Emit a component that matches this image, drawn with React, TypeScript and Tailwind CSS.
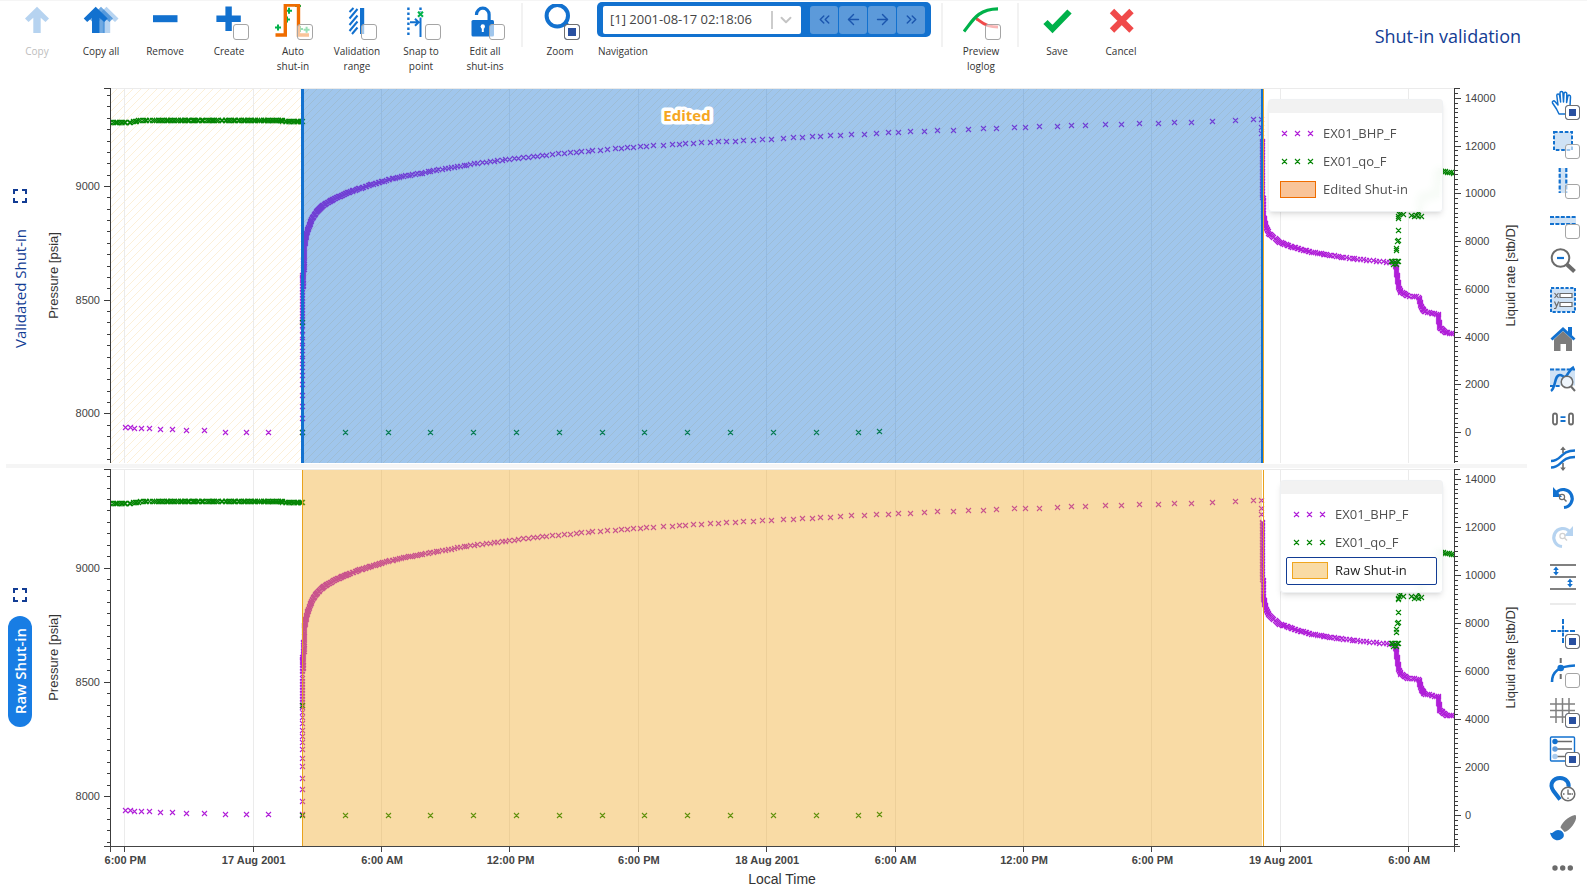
import { useLayoutEffect, useRef, useState } from 'react';
import type { ReactNode } from 'react';
import clsx from 'clsx';
import { ArrowLeft, ArrowRight, ChevronDown, ChevronsLeft, ChevronsRight } from 'lucide-react';

const BLUE = '#1271cf';
const GREY = '#6b6b6b';
const BHP_COLOR = '#b01fd8';
const RATE_COLOR = '#058505';

/* ---------- data: hours since 16 Aug 18:00 ---------- */

type Point = [number, number];

const T_MIN = -0.67;
const T_MAX = 62.14;
const SHUT_START = 8.31;
const SHUT_END = 53.18;
const PRESSURE: Point = [7782, 9431];
const RATE: Point = [-1295, 14418];

function noise(i: number) {
  const v = Math.sin(i * 12.9898) * 43758.5453;
  return v - Math.floor(v) - 0.5;
}

// Puts `n` evenly spaced marks between each anchor and the next one
function along(anchors: [number, number, number][]): Point[] {
  const out: Point[] = [];
  for (let i = 0; i < anchors.length - 1; i++) {
    const [x0, y0, n] = anchors[i];
    const [x1, y1] = anchors[i + 1];
    for (let k = 0; k < n; k++) {
      out.push([x0 + ((x1 - x0) * k) / n, y0 + ((y1 - y0) * k) / n]);
    }
  }
  const last = anchors[anchors.length - 1];
  out.push([last[0], last[1]]);
  return out;
}

// Build-up pressure against time since shut-in, interpolated in log time
const BUILDUP: Point[] = [
  [0.07, 8560], [0.12, 8742], [0.2, 8785], [0.35, 8829], [0.51, 8865], [0.89, 8909],
  [1.29, 8934], [2.06, 8969], [2.85, 8996], [3.69, 9020], [4.58, 9042], [5.51, 9057],
  [9.72, 9120], [15.7, 9174], [21.7, 9207], [27.7, 9237], [33.7, 9260], [39.7, 9278], [44.6, 9292],
];

function buildUp(): Point[] {
  const out: Point[] = [];
  let i = 0;
  for (let dt = 0.07; dt < 44.3; dt *= 1.021 + 0.01 * noise(i), i++) {
    const hi = Math.max(1, BUILDUP.findIndex(([x]) => x > dt));
    const [x0, y0] = BUILDUP[hi - 1];
    const [x1, y1] = BUILDUP[hi];
    const f = Math.log(dt / x0) / Math.log(x1 / x0);
    out.push([SHUT_START + dt, y0 + (y1 - y0) * f]);
  }
  return out;
}

const bhp: Point[] = [
  [0.04, 7939], [0.29, 7939], [0.46, 7934], [0.82, 7934], [1.18, 7934], [1.69, 7930],
  [2.27, 7930], [2.92, 7925], [3.75, 7925], [4.73, 7920], [5.71, 7920], [6.74, 7920],
  ...[7920, 7978, 8032, 8080, 8130, 8168, 8205, 8235, 8263, 8291, 8320, 8345, 8368, 8388].map(
    (p): Point => [8.32, p],
  ),
  ...along([[8.32, 8400, 14], [8.32, 8585, 10], [8.38, 8640, 14], [8.42, 8742, 0]]),
  ...buildUp(),
  [52.77, 9294],
  [53.13, 9294], [53.13, 9260], [53.13, 9232],
  ...along([
    [53.19, 9200, 50], [53.22, 8882, 18], [53.34, 8823, 7], [53.5, 8791, 9], [54, 8755, 10],
    [54.6, 8734, 11], [55.4, 8713, 9], [56.2, 8699, 8], [57.1, 8687, 8], [58.2, 8675, 5],
    [59, 8668, 3], [59.4, 8664, 24], [59.55, 8560, 6], [59.66, 8536, 6], [59.97, 8519, 5],
    [60.5, 8513, 12], [60.6, 8472, 8], [60.75, 8450, 8], [61.4, 8436, 16], [61.47, 8379, 8],
    [61.77, 8357, 4], [62.1, 8353, 0],
  ]),
];

const rate: Point[] = [
  ...along([
    [-0.6, 12984, 12], [0.1, 12984, 8], [0.65, 13060, 6], [1.3, 13085, 96], [7.35, 13085, 3],
    [7.5, 13040, 18], [8.28, 13040, 0],
  ]).map(([t, q], i): Point => [t + 0.1 * noise(i), q]),
  [8.32, 4597],
  [8.32, 0],
  ...Array.from({ length: 13 }, (_, i): Point => [10.33 + 2 * i, 0]),
  [35.27, 30],
  ...along([[59.2, 7150, 5], [59.55, 7180, 0]]),
  [59.3, 7060], [59.45, 7060], [59.46, 7640], [59.46, 7730], [59.5, 8010], [59.56, 8060], [59.53, 8470],
  [59.53, 8980], [59.55, 9060], [59.6, 9130], [59.62, 9190], [59.8, 9130], [60.15, 9110], [60.3, 9060],
  [60.4, 9090], [60.5, 9050], [60.6, 9070], [60.5, 9250],
  ...along([[60.55, 9400, 6], [60.6, 9900, 16], [61.3, 9960, 12], [61.4, 10980, 8], [62.1, 10870, 0]]),
];

/* ---------- chart ---------- */

function useSize() {
  const ref = useRef<HTMLDivElement>(null);
  const [size, setSize] = useState({ width: 1487, height: 378 });
  useLayoutEffect(() => {
    const el = ref.current;
    if (!el) return;
    const measure = () => setSize({ width: el.clientWidth, height: el.clientHeight });
    measure();
    const observer = new ResizeObserver(measure);
    observer.observe(el);
    return () => observer.disconnect();
  }, []);
  return { ref, ...size };
}

const LEFT = 70;
const RIGHT = 73;
const GRID_HOURS = [0, 6, 12, 18, 24, 30, 36, 42, 48, 54, 60];
const GRID_LABELS = [
  '6:00 PM', '17 Aug 2001', '6:00 AM', '12:00 PM', '6:00 PM', '18 Aug 2001',
  '6:00 AM', '12:00 PM', '6:00 PM', '19 Aug 2001', '6:00 AM',
];

function timeScale(width: number) {
  return (t: number) => LEFT + ((t - T_MIN) / (T_MAX - T_MIN)) * (width - LEFT - RIGHT);
}

function marks(points: Point[], x: (v: number) => number, y: (v: number) => number) {
  return points
    .map(([a, b]) => `M${Math.floor(x(a)) - 2} ${Math.round(y(b)) - 2}l5 5m0-5l-5 5`)
    .join('');
}

function range(from: number, to: number, step: number) {
  const out: number[] = [];
  for (let v = Math.ceil(from / step) * step; v <= to; v += step) out.push(v);
  return out;
}

interface ChartProps {
  variant: 'edited' | 'raw';
  top: number;
  children: ReactNode;
}

function Chart({ variant, top, children }: ChartProps) {
  const { ref, width, height } = useSize();
  const edited = variant === 'edited';
  const bottom = height;
  const x = timeScale(width);
  const y = (v: number, [lo, hi]: Point) => bottom - ((v - lo) / (hi - lo)) * (bottom - top);
  const yp = (v: number) => y(v, PRESSURE);
  const yq = (v: number) => y(v, RATE);
  const right = width - RIGHT;
  const x0 = Math.round(x(SHUT_START));
  const x1 = Math.round(x(SHUT_END));
  const mid = (top + bottom) / 2;

  return (
    <div ref={ref} className="relative min-w-0 flex-1 overflow-hidden">
      <svg
        width={width}
        height={height}
        className="absolute inset-0 font-['Liberation_Sans',sans-serif]"
        role="img"
        aria-label={edited ? 'Validated shut-in chart' : 'Raw shut-in chart'}
      >
        <defs>
          <pattern id={`hatch-${variant}`} width="8" height="8" patternUnits="userSpaceOnUse">
            <path d="M-1 9 9-1M-1 1 1-1M7 9 9 7" stroke="#fbe9c8" strokeWidth="0.7" />
          </pattern>
          <clipPath id={`plot-${variant}`}>
            <rect x={LEFT} y={top} width={right - LEFT} height={bottom - top} />
          </clipPath>
        </defs>

        {edited && (
          <rect x={LEFT} y={top} width={x1 - LEFT} height={bottom - top} fill="url(#hatch-edited)" />
        )}
        <path d={`M${LEFT} ${top + 0.5}H${right}`} stroke="#ebebeb" />
        {GRID_HOURS.map((t) => (
          <path key={t} d={`M${Math.round(x(t)) + 0.5} ${top}V${bottom}`} stroke="#ebebeb" />
        ))}

        <g clipPath={`url(#plot-${variant})`} fill="none" strokeWidth="1.1">
          <path d={marks(bhp, x, yp)} stroke={BHP_COLOR} />
          <path d={marks(rate, x, yq)} stroke={RATE_COLOR} />
        </g>

        <rect
          x={x0}
          y={top + 1}
          width={x1 - x0}
          height={bottom - top - 1}
          fill={edited ? BLUE : '#f0a61e'}
          fillOpacity="0.4"
        />
        {edited ? (
          <>
            <path d={`M${x0 + 0.5} ${top + 1}V${bottom}`} stroke={BLUE} strokeWidth="3" />
            <path d={`M${x1} ${top + 1}V${bottom}`} stroke={BLUE} strokeWidth="2" />
            <path d={`M${x1 + 1.5} ${top + 1}V${bottom}`} stroke="#efa820" />
            <text
              x={(LEFT + x1) / 2 + 1}
              y={top + 33}
              textAnchor="middle"
              className="font-['Open_Sans',sans-serif] text-[15px] font-bold"
              fill="#f5a623"
              stroke="white"
              strokeWidth="7"
              strokeLinejoin="round"
              paintOrder="stroke"
            >
              Edited
            </text>
          </>
        ) : (
          <path d={`M${x0 + 0.5} ${top + 1}V${bottom}M${x1 + 1.5} ${top + 1}V${bottom}`} stroke="#e9a21c" />
        )}

        <g stroke="#3c3c3c" fill="none">
          <path d={`M${LEFT + 0.5} ${top}V${bottom}M${LEFT - 6} ${top + 0.5}h6`} />
          <path d={`M${right + 0.5} ${top}V${bottom}M${right} ${top + 0.5}h6`} />
          {range(PRESSURE[0], PRESSURE[1], 50).map((v) => (
            <path key={v} d={`M${LEFT} ${Math.round(yp(v)) + 0.5}h${v % 500 ? -3 : -6}`} />
          ))}
          {range(RATE[0], RATE[1], 200).map((v) => (
            <path key={v} d={`M${right} ${Math.round(yq(v)) + 0.5}h${v % 2000 ? 4 : 7}`} />
          ))}
        </g>
        <g fill="#444" className="text-[11px]">
          {range(PRESSURE[0], PRESSURE[1], 500).map((v) => (
            <text key={v} x={LEFT - 10} y={Math.round(yp(v)) + 4} textAnchor="end">
              {v}
            </text>
          ))}
          {range(0, RATE[1], 2000).map((v) => (
            <text key={v} x={right + 11} y={Math.round(yq(v)) + 4}>
              {v}
            </text>
          ))}
        </g>
        <g fill="#333" className="text-[13px]" textAnchor="middle">
          <text transform={`translate(18 ${mid}) rotate(-90)`}>Pressure [psia]</text>
          <text transform={`translate(${width - 12} ${mid}) rotate(-90)`}>Liquid rate [stb/D]</text>
        </g>
      </svg>
      {children}
    </div>
  );
}

function TimeAxis() {
  const { ref, width } = useSize();
  const x = timeScale(width);
  return (
    <div ref={ref} className="ml-10 h-[47px] shrink-0 overflow-hidden">
      <svg width={width} height="47" className="font-['Liberation_Sans',sans-serif]">
        <path d={`M${LEFT - 6} 0.5H${width - RIGHT + 6}`} stroke="#444" />
        <path d={`M${LEFT + 0.5} 0v6M${width - RIGHT + 0.5} 0v6`} stroke="#444" />
        {GRID_HOURS.map((t, i) => (
          <g key={t}>
            <path d={`M${Math.round(x(t)) + 0.5} 0v6`} stroke="#444" />
            <text x={x(t) + 1} y="18" textAnchor="middle" fill="#444" className="text-[11px] font-bold">
              {GRID_LABELS[i]}
            </text>
          </g>
        ))}
        <text x={(LEFT + width - RIGHT) / 2} y="38" textAnchor="middle" fill="#333" className="text-[14px]">
          Local Time
        </text>
      </svg>
    </div>
  );
}

interface LegendItem {
  label: string;
  color: string;
  area?: boolean;
  selected?: boolean;
}

function Legend({ items, className }: { items: LegendItem[]; className?: string }) {
  return (
    <div
      className={clsx(
        'absolute right-[84px] rounded-sm border border-gray-200/60 bg-white/95 shadow-md backdrop-blur-xs',
        className,
      )}
    >
      <div className="h-[13px] bg-[#f2f2f2]" />
      <div className="flex flex-col px-[5px] py-[7px]">
        {items.map(({ label, color, area, selected }) => (
          <button
            key={label}
            type="button"
            className={clsx(
              'flex h-7 items-center gap-[7px] rounded-[2px] border px-[5px] text-[13px] whitespace-nowrap',
              selected ? 'border-[#123c94] bg-white font-medium text-[#222]' : 'border-transparent text-[#505050]',
            )}
          >
            <svg width="36" height="18" viewBox="0 0 36 18" fill="none">
              {area ? (
                <rect x="0.5" y="0.5" width="35" height="16" fill={color} fillOpacity="0.4" stroke={color} />
              ) : (
                <path
                  d="M2 6l5 5m0-5l-5 5M15 6l5 5m0-5l-5 5M28 6l5 5m0-5l-5 5"
                  stroke={color}
                  strokeWidth="1.1"
                />
              )}
            </svg>
            {label}
          </button>
        ))}
      </div>
    </div>
  );
}

function Rail({ label, active }: { label: string; active?: boolean }) {
  return (
    <div className="flex w-10 shrink-0 flex-col items-center justify-center gap-3.5">
      <button type="button" aria-label={`Maximize ${label}`}>
        <svg width="14" height="14" viewBox="0 0 14 14" fill="none" stroke="#123c94" strokeWidth="2">
          <path d="M1 5V1h4M9 1h4v4M13 9v4H9M5 13H1V9" />
        </svg>
      </button>
      <button
        type="button"
        className={clsx(
          'flex w-6 items-center justify-center rounded-full py-3 text-[15px]',
          active ? 'bg-[#187de4] font-semibold text-white' : 'font-medium text-[#123c94]',
        )}
      >
        <span className="block rotate-180 leading-6 whitespace-nowrap [writing-mode:vertical-rl]">{label}</span>
      </button>
    </div>
  );
}

/* ---------- tools ---------- */

interface ToolProps {
  label: string;
  icon: ReactNode;
  toggle?: boolean;
  checked?: boolean;
  disabled?: boolean;
}

interface ToolIconProps extends Omit<ToolProps, 'label'> {
  boxClassName: string;
}

function ToolIcon({ icon, toggle, checked, disabled, boxClassName }: ToolIconProps) {
  return (
    <span className="relative block size-9 shrink-0">
      <svg width="36" height="36" viewBox="0 0 36 36" fill="none" opacity={disabled ? 0.3 : 1} aria-hidden>
        {icon}
      </svg>
      {toggle && (
        <input
          type="checkbox"
          defaultChecked={checked}
          className={clsx(
            'absolute appearance-none rounded-[3px] border border-[#a5a5a5] bg-white/60',
            'checked:border-[#707070] checked:bg-[#2950a0] checked:shadow-[inset_0_0_0_3px_white]',
            boxClassName,
          )}
        />
      )}
    </span>
  );
}

function ToolbarItem({ label, ...tool }: ToolProps) {
  const Tag = tool.toggle ? 'label' : 'button';
  return (
    <Tag className="flex w-16 shrink-0 flex-col items-center pt-[3px]">
      <ToolIcon {...tool} boxClassName="top-5 left-[22px] size-4" />
      <span
        className={clsx(
          'mt-1 px-1 text-center text-[10px] leading-[15px] whitespace-pre-line',
          tool.disabled ? 'text-[#bdbdbd]' : 'text-[#333]',
        )}
      >
        {label}
      </span>
    </Tag>
  );
}

function SidebarItem({ label, ...tool }: ToolProps) {
  const Tag = tool.toggle ? 'label' : 'button';
  return (
    <Tag className="flex min-h-0 flex-1 items-center justify-center" aria-label={label} title={label}>
      <ToolIcon {...tool} boxClassName="top-[21px] left-5 size-[15px]" />
    </Tag>
  );
}

function Separator() {
  return <div className="mt-0.5 h-11 w-0.5 shrink-0 bg-[#f2f2f2]" />;
}

const ARROW = 'M18 2.7 30 14.5 26.5 18 21.7 13.8V29h-7.4V13.8L9.5 18 6 14.5z';

const editTools: ToolProps[] = [
  { label: 'Copy', disabled: true, icon: <path d={ARROW} fill={BLUE} /> },
  {
    label: 'Copy all',
    icon: (
      <g fill={BLUE}>
        <path d={ARROW} transform="translate(5.5)" opacity="0.3" />
        <path d={ARROW} opacity="0.6" />
        <path d={ARROW} transform="translate(-5.3)" />
      </g>
    ),
  },
  { label: 'Remove', icon: <path d="M6 11.2h24.5v7H6z" fill={BLUE} /> },
  { label: 'Create', toggle: true, icon: <path d="M5.4 14.8h24.4M17.6 2.4V27" stroke={BLUE} strokeWidth="6.4" /> },
  {
    label: 'Auto\nshut-in',
    toggle: true,
    icon: (
      <>
        <path
          d="M0 23.4h6M3 20.4v6M11 6.8h6M14 3.8v6M9 15.6h6M12 12.6v6M20 2h6M23 0v6M22 25h6M25 22v6M28.6 25.7h6M31.6 22.7v6"
          stroke="#00b14a"
          strokeWidth="2"
        />
        <path d="M0.5 31h9.8V1h13.2v30H34" stroke="#ef6c00" strokeWidth="3.4" />
      </>
    ),
  },
  {
    label: 'Validation range',
    toggle: true,
    icon: (
      <>
        <path
          d="M10.5 8l4-4M10.5 14.5l8-9.5M10.5 21l8-9.5M10.5 27l8-9.5M13 30l5.5-6.5"
          stroke={BLUE}
          strokeWidth="2"
        />
        <path d="M21 4h4.2v26H21z" fill={BLUE} />
      </>
    ),
  },
  {
    label: 'Snap to point',
    toggle: true,
    icon: (
      <>
        <path d="M5.4 3.4V33" stroke={BLUE} strokeWidth="2.4" strokeDasharray="2.6 2.4" />
        <path d="M17.5 3.4v4" stroke={BLUE} strokeWidth="2.4" strokeDasharray="2.6 1" />
        <path d="M17.5 13.5V33M7 18.3h8M12 14.8l3.6 3.5-3.6 3.5" stroke={BLUE} strokeWidth="2" />
        <path d="M15 7.7l5 5m0-5l-5 5" stroke="#00b14a" strokeWidth="2" />
      </>
    ),
  },
  {
    label: 'Edit all\nshut-ins',
    toggle: true,
    icon: (
      <>
        <rect x="4.5" y="16" width="22.5" height="16.5" rx="1.5" fill={BLUE} />
        <path d="M9.5 11v-.5a6.3 6.3 0 0 1 12.6 0V17" stroke={BLUE} strokeWidth="3.2" />
        <circle cx="15.8" cy="22.5" r="2.2" fill="white" />
        <path d="M15.8 23v5" stroke="white" strokeWidth="2" />
      </>
    ),
  },
];

const checkIcon = <path d="M6.5 18 13.5 25 30.5 7.5" stroke="#00b14a" strokeWidth="6" />;
const crossIcon = <path d="M9 7 28.5 26.5M28.5 7 9 26.5" stroke="#f04a4a" strokeWidth="6.2" />;
const zoomIcon = (
  <>
    <circle cx="15.3" cy="11.8" r="10.7" stroke={BLUE} strokeWidth="4" />
    <path d="M23 19l9 9" stroke={BLUE} strokeWidth="4" />
  </>
);
const loglogIcon = (
  <>
    <path d="M13 15c4 0 6 8 22 8" stroke="#f04a4a" strokeWidth="3" />
    <path d="M1 27.5C9 18 14 5 35 4.8" stroke="#00b14a" strokeWidth="3.2" />
  </>
);

const viewTools: ToolProps[] = [
  {
    label: 'Pan',
    toggle: true,
    checked: true,
    icon: (
      <path
        d="M14 30l-2.5-5-4-6c-.8-1.8 1.3-2.8 2.5-1.5l3 3.500-1.200-9.500c0-2 2.500-2 2.800 0l1 6.500-.6-9c0-2 2.900-2 2.900 0l.6 9 .5-8.500c.2-1.900 2.800-1.700 2.800.3l-.2 8.700 1.200-6.200c.5-1.900 3-1.300 2.700.7L25 22v4l-1 4z"
        stroke={BLUE}
        strokeWidth="1.5"
        strokeLinejoin="round"
      />
    ),
  },
  {
    label: 'Select area',
    toggle: true,
    icon: <path d="M9 9h18v18H9z" fill="#cfe2f5" stroke={BLUE} strokeWidth="2" strokeDasharray="3.6 1.8" />,
  },
  {
    label: 'Select vertical range',
    toggle: true,
    icon: (
      <>
        <path d="M14.5 5h7v25h-7z" fill="#cfe2f5" />
        <path d="M14.7 5v25M21.3 5v25" stroke={BLUE} strokeWidth="2.2" strokeDasharray="4 1.8" />
      </>
    ),
  },
  {
    label: 'Select horizontal range',
    toggle: true,
    icon: (
      <>
        <path d="M5 14h26v7H5z" fill="#cfe2f5" />
        <path d="M5 14h26M5 21h26" stroke={BLUE} strokeWidth="2.2" strokeDasharray="4 1.4" />
      </>
    ),
  },
  {
    label: 'Zoom out',
    icon: (
      <>
        <circle cx="15.5" cy="16" r="8.8" stroke={GREY} strokeWidth="2" />
        <path d="M22 22.5l7.5 7" stroke={GREY} strokeWidth="4" />
        <path d="M12 16h7" stroke={BLUE} strokeWidth="2.2" />
      </>
    ),
  },
  {
    label: 'Axis limits',
    icon: (
      <>
        <path d="M6 6h24v24H6z" fill="#cfe2f5" stroke={BLUE} strokeWidth="2" strokeDasharray="3.2 1.6" />
        <path d="M15 11.500h12v4H15zM15 20.500h12v4H15z" fill="white" stroke={GREY} strokeWidth="1.2" />
        <path d="M9.5 11l4 5m0-5l-4 5M9.5 19.5l2.200 5m2-5-3 7H9" stroke={GREY} strokeWidth="1.2" />
      </>
    ),
  },
  {
    label: 'Home',
    icon: (
      <>
        <path d="M18 10 27 18.5V30h-6v-7h-5.500v7H9V18.5z" fill="#7c7c7c" />
        <path d="M6.5 18.5 18 8l11.5 10.5" stroke={BLUE} strokeWidth="3" />
        <path d="M23 6h4v8h-4z" fill={BLUE} />
      </>
    ),
  },
  {
    label: 'Zoom to curve',
    icon: (
      <>
        <path d="M5 7.5h25v17H5z" fill="#cfe2f5" />
        <path d="M5 8.5h25M5 25h11" stroke={BLUE} strokeWidth="2" strokeDasharray="4 1.6" />
        <path d="M6 30c5-3 3-16 9-16 3 0 4 4 7 0 2-3 3-6 7-8" stroke={BLUE} strokeWidth="2.6" />
        <circle cx="22" cy="21" r="5.8" fill="#eef5fc" stroke={GREY} strokeWidth="1.5" />
        <path d="M26 25.5l4 4.500" stroke={GREY} strokeWidth="2" />
      </>
    ),
  },
  {
    label: 'Align zero',
    icon: (
      <>
        <rect x="8" y="12.5" width="4" height="11" rx="2" stroke={GREY} strokeWidth="1.8" />
        <rect x="24" y="12.5" width="4" height="11" rx="2" stroke={GREY} strokeWidth="1.8" />
        <path d="M15.5 16.2h5M15.5 20h5" stroke={BLUE} strokeWidth="1.8" />
      </>
    ),
  },
  {
    label: 'Shift curves',
    icon: (
      <>
        <path d="M6 21c11 0 9-10.500 24-10.500M6 27.500C17 27.500 15 17 30 17" stroke={BLUE} strokeWidth="2.4" />
        <path d="M18 13V8M18 23v5" stroke={GREY} strokeWidth="1.6" />
        <path d="M15.2 10 18 6.5l2.800 3.500zM15.200 27.500 18 31l2.800-3.500z" fill={GREY} />
      </>
    ),
  },
  {
    label: 'Undo zoom',
    icon: (
      <>
        <path d="M11.5 12.5a9 9 0 1 1 7.5 15" stroke={BLUE} strokeWidth="3.2" />
        <path d="M8 7v10h9z" fill={BLUE} />
        <circle cx="17" cy="17" r="2.6" stroke={GREY} strokeWidth="1.2" />
        <path d="M19 19l2.5 2.5" stroke={GREY} strokeWidth="1.4" />
      </>
    ),
  },
  {
    label: 'Redo zoom',
    disabled: true,
    icon: (
      <>
        <path d="M24.5 12.5a9 9 0 1 0-7.5 15" stroke={BLUE} strokeWidth="3.2" />
        <path d="M28 7v10h-9z" fill={BLUE} />
        <circle cx="17.5" cy="17" r="2.6" stroke={GREY} strokeWidth="1.2" />
        <path d="M19.5 19l2.5 2.5" stroke={GREY} strokeWidth="1.4" />
      </>
    ),
  },
  {
    label: 'Stack spacing',
    icon: (
      <>
        <path d="M5 6h26M5 18h26M5 30h26" stroke="#808080" strokeWidth="2" />
        <path d="M11 9v6M25 21v6" stroke={BLUE} strokeWidth="1.6" />
        <path
          d="M8.2 11 11 7.5l2.8 3.5zM8.2 13 11 16.5l2.8-3.5zM22.2 23l2.8-3.5 2.8 3.5zM22.2 25l2.8 3.5 2.8-3.5z"
          fill={BLUE}
        />
      </>
    ),
  },
];

const displayTools: ToolProps[] = [
  {
    label: 'Crosshair',
    toggle: true,
    checked: true,
    icon: (
      <path
        d="M6 18h5m1.5 0H16m4 0h3.5M25 18h5M18 6v5m0 1.5V16m0 4v3.5M18 25v5M16.5 18h3M18 16.5v3"
        stroke={BLUE}
        strokeWidth="2"
      />
    ),
  },
  {
    label: 'Tangent',
    toggle: true,
    icon: (
      <>
        <path d="M15.7 6v24" stroke={GREY} strokeWidth="2" strokeDasharray="5 3" />
        <path d="M7 30c0-10 6-16 23-16.5" stroke={BLUE} strokeWidth="2.6" />
        <circle cx="15.7" cy="16" r="3.3" fill={BLUE} />
      </>
    ),
  },
  {
    label: 'Grid',
    toggle: true,
    checked: true,
    icon: (
      <path d="M5 12h25M5 18.5h25M5 25h25M11 6v25M17.5 6v25M24 6v25" stroke="#808080" strokeWidth="1.5" />
    ),
  },
  {
    label: 'Legend',
    toggle: true,
    checked: true,
    icon: (
      <>
        <rect x="5.5" y="6" width="24" height="24" rx="1" fill="white" stroke={BLUE} strokeWidth="1.4" />
        <path d="M12 10.5h15M12 18h15M12 25.5h10" stroke={GREY} strokeWidth="1.4" />
        <circle cx="10" cy="10.5" r="2.7" fill={BLUE} />
        <circle cx="10" cy="18" r="2.7" fill="#5f9cdc" />
        <circle cx="10" cy="25.5" r="2.7" fill="#a9cbee" />
      </>
    ),
  },
  {
    label: 'Time marker',
    icon: (
      <>
        <path d="M15 28.5 8.5 20c-5-7 0-13 6.500-13 6 0 9.500 5 8.500 9" stroke={BLUE} strokeWidth="4" />
        <circle cx="23" cy="23" r="6.8" fill="white" stroke={GREY} strokeWidth="1.5" />
        <path d="M23 18.5V23h3M18 23h1.500M23 26.500V28M26.500 23H28" stroke={GREY} strokeWidth="1.3" />
      </>
    ),
  },
  {
    label: 'Style',
    icon: (
      <>
        <path d="M30 5c-7 1-14 9-14.500 12.500l4 4.500C25 21 32 11 31 6.500 31 5.500 30.500 5 30 5z" fill="#808080" />
        <path d="M5 22.5c3 2 4-2.500 8-2.500 4 0 7 3.500 5.500 7-2.500 4.500-11.500 5.500-13.500-4.500z" fill={BLUE} />
      </>
    ),
  },
  {
    label: 'More',
    icon: (
      <g fill={GREY}>
        <circle cx="10" cy="18" r="2.7" />
        <circle cx="17.7" cy="18" r="2.7" />
        <circle cx="25.3" cy="18" r="2.7" />
      </g>
    ),
  },
];

const navButtons = [
  { label: 'First shut-in', Icon: ChevronsLeft },
  { label: 'Previous shut-in', Icon: ArrowLeft },
  { label: 'Next shut-in', Icon: ArrowRight },
  { label: 'Last shut-in', Icon: ChevronsRight },
];

function Navigation() {
  return (
    <div className="ml-[5px] flex w-[334px] shrink-0 flex-col pt-px">
      <div className="flex h-[35px] items-center rounded-[5px] bg-[#1271cf] px-1.5">
        <div className="relative h-7 w-[198px]">
          <select
            id="shut-in"
            className="h-full w-full appearance-none rounded-[2px] bg-white pr-9 pl-[7px] text-[13px] text-[#444] outline-none"
          >
            <option>[1] 2001-08-17 02:18:06</option>
          </select>
          <span className="pointer-events-none absolute inset-y-1 right-1.5 flex items-center gap-1 text-[#c4c4c4]">
            <span className="h-[18px] w-0.5 bg-[#ccc]" />
            <ChevronDown size={18} strokeWidth={2.5} />
          </span>
        </div>
        <div className="ml-auto flex gap-px">
          {navButtons.map(({ label, Icon }) => (
            <button
              key={label}
              type="button"
              aria-label={label}
              className="flex size-[28px] items-center justify-center rounded-[3px] bg-[#5c9ada] text-[#1b56ae]"
            >
              <Icon size={17} strokeWidth={2} />
            </button>
          ))}
        </div>
      </div>
      <label htmlFor="shut-in" className="mt-[7px] self-start pl-px text-[10px] leading-[15px] text-[#333]">
        Navigation
      </label>
    </div>
  );
}

export default function App() {
  return (
    <div className="flex h-screen min-h-[640px] border-t border-[#f5f5f5] bg-white font-['Open_Sans','Noto_Sans',sans-serif]">
      <div className="flex min-w-0 flex-1 flex-col">
        <header className="flex h-[85px] shrink-0 items-start pl-[5px]">
          {editTools.map((tool) => (
            <ToolbarItem key={tool.label} {...tool} />
          ))}
          <div className="w-1 shrink-0" />
          <Separator />
          <div className="w-[5px] shrink-0" />
          <ToolbarItem label="Zoom" toggle checked icon={zoomIcon} />
          <Navigation />
          <div className="w-2.5 shrink-0" />
          <Separator />
          <div className="w-1.5 shrink-0" />
          <ToolbarItem label="Preview loglog" toggle icon={loglogIcon} />
          <div className="w-1 shrink-0" />
          <Separator />
          <div className="w-1.5 shrink-0" />
          <ToolbarItem label="Save" icon={checkIcon} />
          <ToolbarItem label="Cancel" icon={crossIcon} />
          <h1 className="mt-[23px] mr-1.5 ml-auto text-[18px] leading-6 font-medium whitespace-nowrap text-[#123c94]">
            Shut-in validation
          </h1>
        </header>

        <section className="flex min-h-0 flex-1">
          <Rail label="Validated Shut-in" />
          <Chart variant="edited" top={2}>
            <Legend
              className="top-[13px] w-[175px]"
              items={[
                { label: 'EX01_BHP_F', color: BHP_COLOR },
                { label: 'EX01_qo_F', color: RATE_COLOR },
                { label: 'Edited Shut-in', color: '#ef6c00', area: true },
              ]}
            />
          </Chart>
        </section>
        <div className="ml-1.5 h-1.5 shrink-0 border-y border-white bg-[#f5f5f5]" />
        <section className="flex min-h-0 flex-1">
          <Rail label="Raw Shut-in" active />
          <Chart variant="raw" top={0}>
            <Legend
              className="top-[11px] w-[163px]"
              items={[
                { label: 'EX01_BHP_F', color: BHP_COLOR },
                { label: 'EX01_qo_F', color: RATE_COLOR },
                { label: 'Raw Shut-in', color: '#f0a61e', area: true, selected: true },
              ]}
            />
          </Chart>
        </section>
        <TimeAxis />
      </div>

      <aside className="flex w-[60px] shrink-0 flex-col pt-[81px] pb-[5px] pl-3">
        {viewTools.map((tool) => (
          <SidebarItem key={tool.label} {...tool} />
        ))}
        <div className="mx-auto my-1.5 h-0.5 w-[26px] shrink-0 bg-[#ebebeb]" />
        {displayTools.map((tool) => (
          <SidebarItem key={tool.label} {...tool} />
        ))}
      </aside>
    </div>
  );
}
